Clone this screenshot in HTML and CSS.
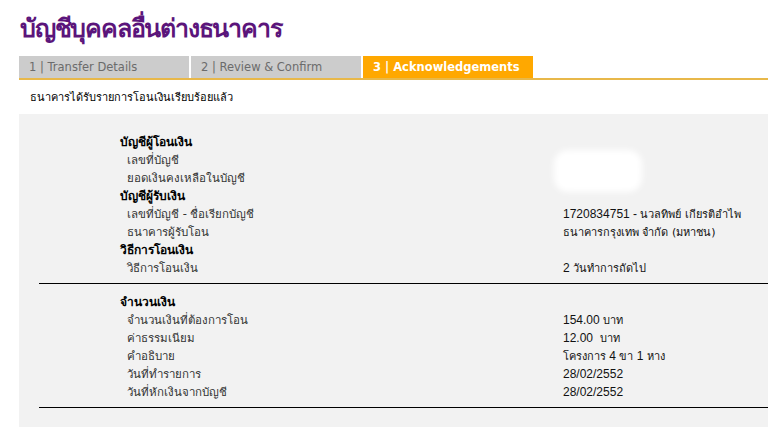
FILE: index.html
```html
<!DOCTYPE html>
<html lang="th">
<head>
<meta charset="utf-8">
<link rel="stylesheet" href="styles.css">
</head>
<body>
<div class="page">
  <h1 class="title">บัญชีบุคคลอื่นต่างธนาคาร</h1>
  <div class="tabs">
    <div class="tab">1 | Transfer Details</div>
    <div class="tab">2 | Review &amp; Confirm</div>
    <div class="tab active">3 | Acknowledgements</div>
  </div>
  <p class="msg">ธนาคารได้รับรายการโอนเงินเรียบร้อยแล้ว</p>
  <div class="panel">
    <div class="group">
      <div class="row"><span class="head">บัญชีผู้โอนเงิน</span></div>
      <div class="row"><span class="label">เลขที่บัญชี</span><span class="value"></span></div>
      <div class="row"><span class="label">ยอดเงินคงเหลือในบัญชี</span><span class="value"></span></div>
      <div class="row"><span class="head">บัญชีผู้รับเงิน</span></div>
      <div class="row"><span class="label">เลขที่บัญชี - ชื่อเรียกบัญชี</span><span class="value">1720834751 - <span class="th">นวลทิพย์ เกียรติอำไพ</span></span></div>
      <div class="row"><span class="label">ธนาคารผู้รับโอน</span><span class="value"><span class="th">ธนาคารกรุงเทพ จำกัด (มหาชน)</span></span></div>
      <div class="row"><span class="head">วิธีการโอนเงิน</span></div>
      <div class="row"><span class="label">วิธีการโอนเงิน</span><span class="value">2 <span class="th">วันทำการถัดไป</span></span></div>
      <div class="blot"></div>
    </div>
    <hr class="rule">
    <div class="group">
      <div class="row"><span class="head">จำนวนเงิน</span></div>
      <div class="row"><span class="label">จำนวนเงินที่ต้องการโอน</span><span class="value">154.00 <span class="th">บาท</span></span></div>
      <div class="row"><span class="label">ค่าธรรมเนียม</span><span class="value">12.00&nbsp; <span class="th">บาท</span></span></div>
      <div class="row"><span class="label">คำอธิบาย</span><span class="value"><span class="th">โครงการ</span> 4 <span class="th">ขา</span> 1 <span class="th">หาง</span></span></div>
      <div class="row"><span class="label">วันที่ทำรายการ</span><span class="value">28/02/2552</span></div>
      <div class="row"><span class="label">วันที่หักเงินจากบัญชี</span><span class="value">28/02/2552</span></div>
    </div>
    <hr class="rule">
  </div>
</div>
</body>
</html>
```

FILE: styles.css
```css
html, body {
  margin: 0;
  padding: 0;
  background: #ffffff;
  overflow: hidden;
}
.page {
  width: 768px;
  height: 427px;
  padding-left: 19px;
  box-sizing: border-box;
  font-family: Tahoma, "DejaVu Sans", "Noto Sans", sans-serif;
}
.title {
  margin: 0;
  height: 56px;
  box-sizing: border-box;
  padding: 13px 0 0 1px;
  font-size: 25px;
  line-height: 32px;
  font-weight: bold;
  color: #5b157b;
  letter-spacing: -1.2px;
}
.tabs {
  display: flex;
  gap: 2px;
  height: 22px;
  border-bottom: 2px solid #e8b84a;
}
.tab {
  width: 170px;
  background: #cccccc;
  color: #6b6b6b;
  font-family: "DejaVu Sans", Verdana, sans-serif;
  font-size: 11.5px;
  line-height: 23px;
  padding-left: 10px;
  box-sizing: border-box;
}
.tab.active {
  background: #ffa800;
  color: #ffffff;
  font-weight: bold;
}
.msg {
  margin: 0;
  height: 34px;
  padding: 10px 0 0 11px;
  box-sizing: border-box;
  font-size: 11px;
  line-height: 16px;
  color: #000;
}
.panel {
  background: #f2f2f2;
  height: 313px;
  padding-top: 19px;
  box-sizing: border-box;
}
.group {
  position: relative;
}
.row {
  display: grid;
  grid-template-columns: 443px 1fr;
  height: 18px;
  line-height: 18px;
  padding-left: 101px;
  font-size: 11.5px;
}
.head {
  font-weight: bold;
  color: #000;
  font-size: 12px;
}
.label {
  padding-left: 7px;
  color: #333;
}
.value {
  font-family: "Liberation Sans", Arial, sans-serif;
  font-size: 12px;
  color: #111;
}
.th {
  font-family: Tahoma, "DejaVu Sans", "Noto Sans", sans-serif;
  font-size: 11px;
}
.rule {
  margin: 6px 0 9px 20px;
  border: 0;
  border-top: 1px solid #000;
  height: 0;
}
.blot {
  position: absolute;
  left: 535px;
  top: 17px;
  width: 88px;
  height: 42px;
  background: #ffffff;
  border-radius: 14px;
  filter: blur(3px);
}
```
